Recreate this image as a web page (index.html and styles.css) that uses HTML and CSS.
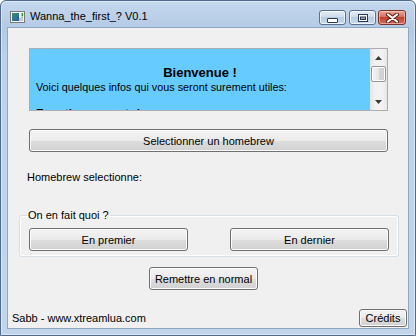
FILE: index.html
```html
<!DOCTYPE html>
<html lang="fr">
<head>
<meta charset="utf-8">
<title>Wanna_the_first_? V0.1</title>
<link rel="stylesheet" href="styles.css">
</head>
<body>
<div class="window">
  <div class="titlebar">
    <svg class="app-icon" width="15" height="12" viewBox="0 0 15 12">
      <defs>
        <linearGradient id="ig" x1="0" y1="0" x2="1" y2="1">
          <stop offset="0" stop-color="#3a8f7a"/>
          <stop offset="1" stop-color="#2a5fa8"/>
        </linearGradient>
      </defs>
      <rect x="0.5" y="0.5" width="14" height="11" fill="#f4f4f4" stroke="#7a7a7a"/>
      <rect x="2" y="2" width="7" height="8" fill="url(#ig)"/>
      <rect x="9" y="7" width="4" height="3" fill="#c8c8c8"/>
      <rect x="11.5" y="2" width="1.5" height="3" fill="#2f9a3a"/>
      <rect x="11.5" y="5.6" width="1.5" height="1" fill="#2f9a3a"/>
    </svg>
    <span class="title">Wanna_the_first_? V0.1</span>
    <div class="caption-btns">
      <div class="cap cap-min">
        <svg width="11" height="5" viewBox="0 0 11 5"><rect x="0.5" y="0.5" width="10" height="4" rx="0.5" fill="#fff" stroke="#2b3950"/></svg>
      </div>
      <div class="cap cap-max">
        <svg width="10" height="8" viewBox="0 0 10 8"><rect x="0.5" y="0.5" width="9" height="7" fill="#fff" stroke="#2b3950"/><rect x="2.5" y="3" width="5" height="2.5" fill="#8fa6c2" stroke="#2b3950"/></svg>
      </div>
      <div class="cap cap-close">
        <svg width="13" height="10" viewBox="0 0 13 10"><path d="M2 1.5 L11 8.5 M11 1.5 L2 8.5" stroke="#5a1a12" stroke-width="4" stroke-linecap="round"/><path d="M2 1.5 L11 8.5 M11 1.5 L2 8.5" stroke="#ffffff" stroke-width="2.2" stroke-linecap="round"/></svg>
      </div>
    </div>
  </div>
  <div class="client">
    <div class="richtext">
      <div class="rt-content">
        <p class="rt-title">Bienvenue !</p>
        <p class="rt-line">Voici quelques infos qui vous seront surement utiles:</p>
        <p class="rt-blank"></p>
        <p class="rt-line rt-bold">Fonctionnement du programme :</p>
      </div>
      <div class="scrollbar">
        <div class="sb-arrow">
          <svg width="7" height="4" viewBox="0 0 7 4"><path d="M0 4 L3.5 0 L7 4 Z" fill="#3c3c3c"/></svg>
        </div>
        <div class="sb-thumb"></div>
        <div class="sb-track"></div>
        <div class="sb-arrow">
          <svg width="7" height="4" viewBox="0 0 7 4"><path d="M0 0 L3.5 4 L7 0 Z" fill="#3c3c3c"/></svg>
        </div>
      </div>
    </div>
    <button class="btn btn-wide">Selectionner un homebrew</button>
    <div class="label">Homebrew selectionne:</div>
    <fieldset class="group">
      <legend class="group-title">On en fait quoi ?</legend>
      <div class="group-row">
        <button class="btn btn-half">En premier</button>
        <button class="btn btn-half">En dernier</button>
      </div>
    </fieldset>
    <div class="reset-row">
      <button class="btn btn-reset">Remettre en normal</button>
    </div>
    <div class="footer">
      <span class="footer-text">Sabb - www.xtreamlua.com</span>
      <button class="btn btn-credits">Crédits</button>
    </div>
  </div>
</div>
</body>
</html>
```
FILE: styles.css
```css
* { box-sizing: border-box; }
html, body { margin: 0; padding: 0; }
body {
  width: 416px;
  height: 336px;
  overflow: hidden;
  font-family: "Liberation Sans", Arial, sans-serif;
  font-size: 11px;
  color: #000;
  background: #fff;
}
.window {
  width: 416px;
  height: 336px;
  border: 1px solid #4e6a8c;
  border-radius: 6px 6px 0 0;
  background: linear-gradient(180deg, #c4d8ee 0px, #b4cbe5 27px, #bdd2ea 60px, #c1d5eb 100%);
  padding: 0 6px 6px 6px;
  display: flex;
  flex-direction: column;
  box-shadow: inset 0 0 0 1px rgba(255,255,255,0.45);
}
.titlebar {
  height: 26px;
  display: flex;
  align-items: flex-start;
  padding-left: 3px;
}
.app-icon {
  margin-top: 10px;
  flex: none;
}
.title {
  margin-left: 5px;
  margin-top: 8px;
  font-size: 11px;
  line-height: 14px;
  color: #000;
  white-space: nowrap;
}
.caption-btns {
  margin-left: auto;
  margin-top: 9px;
  margin-right: 3px;
  display: flex;
  gap: 3px;
}
.cap {
  height: 15px;
  width: 27px;
  border: 1px solid #5b6f8a;
  border-radius: 3px;
  display: flex;
  align-items: center;
  justify-content: center;
  box-shadow: inset 0 0 0 1px rgba(255,255,255,0.7);
  background: linear-gradient(180deg, #e4edf7 0%, #cddbeb 45%, #b7cbe2 50%, #c9daee 100%);
}
.cap-min svg { margin-top: 5px; }
.cap-close {
  width: 28px;
  margin-left: -1px;
  border-color: #7a3127;
  background: linear-gradient(180deg, #e9a99c 0%, #d4705e 45%, #c0412c 50%, #d0705c 100%);
  box-shadow: inset 0 0 0 1px rgba(255,220,210,0.5);
}
.client {
  width: 402px;
  height: 302px;
  border: 1px solid #8ea7c3;
  background: #f0f0f0;
  padding: 20px 20px 0 21px;
  display: flex;
  flex-direction: column;
}
.richtext {
  width: 359px;
  height: 63px;
  border: 1px solid #abadb3;
  background: #66ccff;
  display: flex;
  overflow: hidden;
}
.rt-content {
  flex: 1;
  padding: 16px 0 0 6px;
  overflow: hidden;
}
.rt-content p { margin: 0; white-space: nowrap; }
.rt-title {
  text-align: center;
  padding-right: 6px;
  font-weight: bold;
  font-size: 13px;
  line-height: 15px;
}
.rt-line { line-height: 14px; font-size: 10.8px; }
.rt-blank { height: 13px; }
.rt-bold { font-weight: bold; font-size: 12px; }
.scrollbar {
  width: 17px;
  flex: none;
  display: flex;
  flex-direction: column;
  background: linear-gradient(90deg, #e3e3e3, #f2f2f2 30%, #f2f2f2 70%, #e8e8e8);
}
.sb-arrow {
  height: 17px;
  display: flex;
  align-items: center;
  justify-content: center;
}
.sb-thumb {
  height: 16px;
  margin: 0 1px;
  border: 1px solid #979797;
  border-radius: 2px;
  background: linear-gradient(90deg, #f3f3f3 0%, #e8e8e8 50%, #d6d6d6 51%, #cfcfcf 100%);
  box-shadow: inset 0 0 0 1px #fdfdfd;
}
.sb-track { flex: 1; }
.btn {
  font-family: "Liberation Sans", Arial, sans-serif;
  font-size: 11px;
  color: #000;
  border: 1px solid #707070;
  border-radius: 3px;
  background: linear-gradient(180deg, #f3f3f3 0%, #ebebeb 50%, #dddddd 51%, #d1d1d1 100%);
  box-shadow: inset 0 0 0 1px #fbfbfb;
  padding: 0;
  margin: 0;
  line-height: 14px;
  text-align: center;
}
.btn-wide {
  width: 359px;
  height: 23px;
  margin-top: 18px;
}
.label {
  margin-top: 18px;
  margin-left: -2px;
  line-height: 14px;
}
.group {
  margin: 24px 0 0 -10px;
  width: 380px;
  padding: 0 9px 5px 9px;
  border: 1px solid #d5dfe5;
  border-radius: 3px;
  box-shadow: inset 0 0 0 1px #ffffff;
  min-width: 0;
}
.group-title {
  margin-left: -2px;
  padding: 0 1px;
  line-height: 14px;
}
.group-row {
  margin-top: 6px;
  display: flex;
  justify-content: space-between;
}
.btn-half {
  width: 159px;
  height: 23px;
}
.reset-row {
  margin-top: 10px;
  padding-left: 120px;
  display: flex;
}
.btn-reset {
  width: 109px;
  height: 23px;
}
.footer {
  margin: auto -19px 1px -17px;
  display: flex;
  align-items: center;
  justify-content: space-between;
}
.footer-text { line-height: 14px; }
.btn-credits {
  width: 48px;
  height: 18px;
}
```
